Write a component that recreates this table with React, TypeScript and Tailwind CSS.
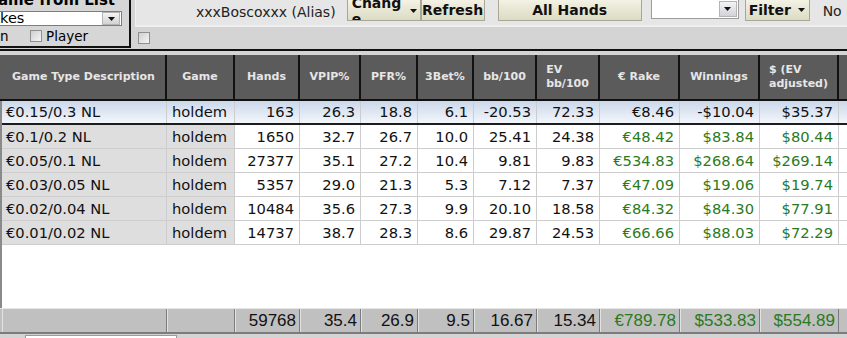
import React from "react";

const COLS =
  "grid grid-cols-[165px_68px_65px_61px_57px_56px_63px_63px_80px_80px_79px_1fr]";

const headers: string[][] = [
  ["Game Type Description"],
  ["Game"],
  ["Hands"],
  ["VPIP%"],
  ["PFR%"],
  ["3Bet%"],
  ["bb/100"],
  ["EV", "bb/100"],
  ["€ Rake"],
  ["Winnings"],
  ["$ (EV", "adjusted)"],
];

const rows: string[][] = [
  ["€0.15/0.3 NL", "holdem", "163", "26.3", "18.8", "6.1", "-20.53", "72.33", "€8.46", "-$10.04", "$35.37"],
  ["€0.1/0.2 NL", "holdem", "1650", "32.7", "26.7", "10.0", "25.41", "24.38", "€48.42", "$83.84", "$80.44"],
  ["€0.05/0.1 NL", "holdem", "27377", "35.1", "27.2", "10.4", "9.81", "9.83", "€534.83", "$268.64", "$269.14"],
  ["€0.03/0.05 NL", "holdem", "5357", "29.0", "21.3", "5.3", "7.12", "7.37", "€47.09", "$19.06", "$19.74"],
  ["€0.02/0.04 NL", "holdem", "10484", "35.6", "27.3", "9.9", "20.10", "18.58", "€84.32", "$84.30", "$77.91"],
  ["€0.01/0.02 NL", "holdem", "14737", "38.7", "28.3", "8.6", "29.87", "24.53", "€66.66", "$88.03", "$72.29"],
];

const totals = ["", "", "59768", "35.4", "26.9", "9.5", "16.67", "15.34", "€789.78", "$533.83", "$554.89"];

function Caret() {
  return (
    <svg width="7" height="4" viewBox="0 0 7 4" className="shrink-0">
      <path d="M0 0h7L3.5 4z" fill="#111" />
    </svg>
  );
}

function CheckBox({ className = "" }: { className?: string }) {
  return (
    <div
      className={`h-[12px] w-[12px] border border-[#8f8f8f] bg-[linear-gradient(135deg,#cfcfcf,#f6f6f6)] ${className}`}
    />
  );
}

function ToolButton({ children, className = "" }: { children: React.ReactNode; className?: string }) {
  return (
    <div
      className={`flex h-[21px] items-center overflow-hidden border border-t-0 border-[#a9a894] bg-[linear-gradient(180deg,#f3f2e4,#dcdbc4)] text-[14px] font-bold text-[#111] ${className}`}
    >
      {children}
    </div>
  );
}

export default function App() {
  return (
    <div className="relative h-[338px] w-[847px] overflow-hidden bg-[#d4d4d4] font-['DejaVu_Sans',sans-serif] text-black">
      {/* top area */}
      <div className="flex h-[49px]">
        <div className="h-[48px] w-[131px] shrink-0 overflow-hidden border-b-2 border-r-2 border-[#111] bg-[#d6d6d6]">
          <div className="-ml-[2px] -mt-[9px] h-[20px] whitespace-nowrap text-[15px] font-bold leading-[18px]">
            ame from List
          </div>
          <div className="flex h-[15px] w-[122px] items-center border border-l-0 border-[#7d7d7d] bg-white">
            <span className="flex-1 text-[14.5px] leading-[15px]">kes</span>
            <div className="mr-[1px] flex h-[13px] w-[18px] items-center justify-center border border-[#b4b4b4] bg-[linear-gradient(180deg,#f4f4f4,#d2d2d8)]">
              <Caret />
            </div>
          </div>
          <div className="mt-[2px] flex h-[16px] items-center text-[13.5px]">
            <span className="w-[30px] leading-[16px]">n</span>
            <CheckBox />
            <span className="ml-[4px] leading-[16px]">Player</span>
          </div>
        </div>

        <div className="ml-[4px] flex flex-1 flex-col">
          <div className="flex h-[25px] items-start border-l border-[#f2f2f2] bg-[#e6e6e6]">
            <span className="ml-[60px] mt-[4px] whitespace-nowrap text-[14px] leading-[17px] text-[#222]">
              xxxBoscoxxx (Alias)
            </span>
            <ToolButton className="ml-[11px] w-[74px] items-start pl-[4px]">
              <div className="-mt-[5px] w-[58px] leading-[16px]">
                <div>Chang</div>
                <div>e</div>
              </div>
              <div className="mt-[9px]">
                <Caret />
              </div>
            </ToolButton>
            <ToolButton className="w-[64px] justify-center">Refresh</ToolButton>
            <ToolButton className="ml-[13px] w-[144px] justify-center">All Hands</ToolButton>
            <div className="ml-[9px] flex h-[19px] w-[88px] items-center justify-end border border-t-0 border-[#9c9c9c] bg-white">
              <div className="mr-[1px] flex h-[16px] w-[18px] items-center justify-center border border-[#b4b4b4] bg-[linear-gradient(180deg,#f4f4f4,#d2d2d8)]">
                <Caret />
              </div>
            </div>
            <ToolButton className="ml-[6px] w-[65px] gap-[7px] pl-[3px]">
              <span>Filter</span>
              <Caret />
            </ToolButton>
            <span className="ml-[13px] mt-[3px] whitespace-nowrap text-[14px] leading-[17px] text-[#222]">
              No <span className="text-[#d98a1c]">F</span>
            </span>
          </div>
          <div className="h-[2px] bg-[#f0f0f0]" />
          <div className="pl-[3px] pt-[5px]">
            <CheckBox />
          </div>
        </div>
      </div>

      <div className="h-[2px] bg-[#111]" />
      <div className="h-[4px]" />

      {/* header */}
      <div className={`${COLS} h-[46px] border-b-2 border-[#111] bg-[#5b5b5b] pl-[2px]`}>
        {headers.map((h, i) => (
          <div
            key={i}
            className="flex items-center justify-center border-r-2 border-[#111] text-[11px] font-bold leading-[14px] text-[#e6e6e6]"
          >
            <div className="text-left">
              {h.map((line) => (
                <div key={line} className="whitespace-nowrap">
                  {line}
                </div>
              ))}
            </div>
          </div>
        ))}
        <div />
      </div>

      {/* body */}
      <div className="h-[207px] border-l-2 border-[#8a8a8a] bg-white">
        {rows.map((row, r) => {
          const selected = r === 0;
          return (
            <div
              key={r}
              className={`${COLS} h-[24px] ${
                selected
                  ? "border-b-2 border-[#1c1c1c] bg-[linear-gradient(180deg,#cbd8ea,#f3f6fb)]"
                  : "border-b border-[#cdcdcd]"
              }`}
            >
              {row.map((cell, c) => (
                <div
                  key={c}
                  className={`flex items-center whitespace-nowrap border-r border-[#cdcdcd] text-[14.7px] leading-[18px] ${
                    c < 2 ? "justify-start pl-[4px]" : "justify-end pr-[5px]"
                  } ${c === 1 ? "pl-[5px]" : ""} ${
                    !selected && c < 2 ? "bg-[#dedede]" : ""
                  } ${!selected && c > 7 ? "text-[#2a7a22]" : "text-[#111]"}`}
                >
                  {cell}
                </div>
              ))}
              <div />
            </div>
          );
        })}
      </div>

      {/* totals */}
      <div className={`${COLS} h-[26px] border-b-2 border-t border-b-[#7c7c7c] border-t-[#e6e6e6] bg-[#c0c0c0] pl-[2px] font-['Liberation_Sans',sans-serif]`}>
        {totals.map((t, i) => (
          <div
            key={i}
            className={`flex items-center justify-end border-l border-r border-l-[#e2e2e2] border-r-[#7c7c7c] pr-[3px] text-[17px] leading-[20px] ${
              i > 7 ? "text-[#2a7a22]" : "text-[#111]"
            }`}
          >
            {t}
          </div>
        ))}
        <div />
      </div>

      <div className="ml-[25px] mt-[1px] h-[6px] w-[152px] border border-[#9a9a9a] bg-white" />
    </div>
  );
}
